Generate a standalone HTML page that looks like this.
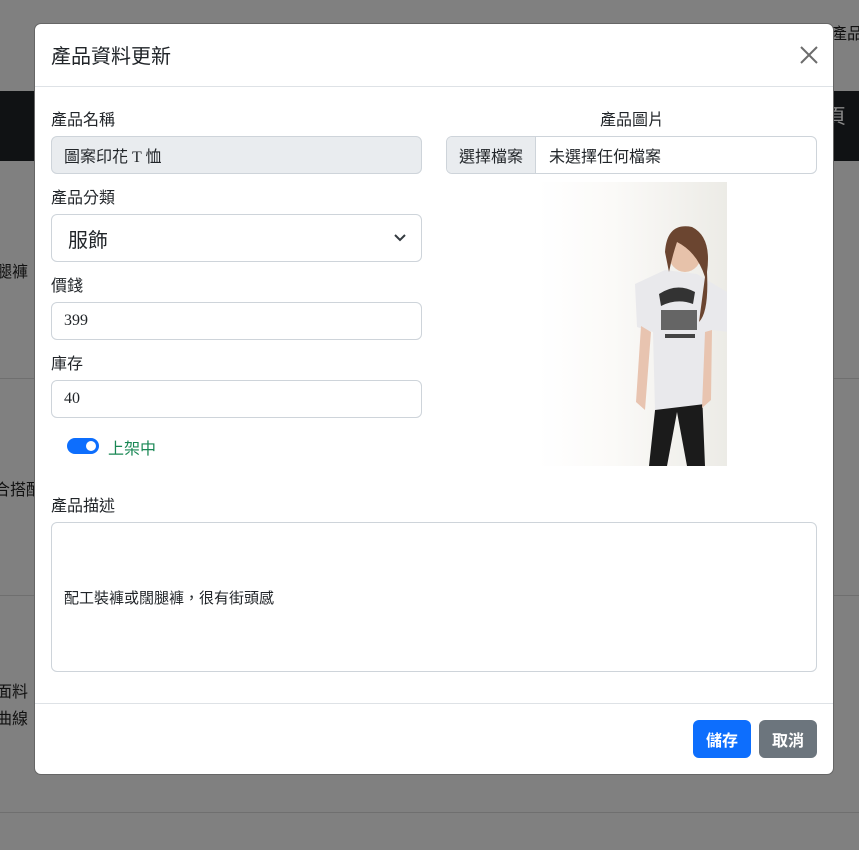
<!DOCTYPE html>
<html><head><meta charset="utf-8"><style>
*{box-sizing:border-box;margin:0;padding:0}
body{width:859px;height:850px;overflow:hidden;background:#808080;font-family:"Liberation Serif","Noto Sans CJK TC",sans-serif;color:#212529;position:relative}
.abs{position:absolute}
.bgt{position:absolute;font-size:16px;color:#111;white-space:nowrap}
.hl{position:absolute;left:0;right:0;height:1px;background:#6f6f6f}
.modal{position:absolute;left:34px;top:23px;width:800px;height:752px;background:#fff;border-radius:7px;border:1px solid #666}
.lbl{position:absolute;font-size:16px;color:#212529}
.inp{position:absolute;border:1px solid #ced4da;border-radius:6px;background:#fff;font-size:16px;padding-left:12px;display:flex;align-items:center}
</style></head><body>
<div class="abs" style="left:0;top:91px;width:859px;height:70px;background:#101214"></div>
<div class="hl" style="top:378px"></div>
<div class="hl" style="top:595px"></div>
<div class="hl" style="top:812px"></div>
<div class="bgt" style="left:815px;top:20px">有產品</div>
<div class="bgt" style="left:826px;top:100px;color:#888;font-size:20px">頁</div>
<div class="bgt" style="left:-4px;top:258px">腿褲，</div>
<div class="bgt" style="left:-6px;top:476px">合搭配</div>
<div class="bgt" style="left:-4px;top:678px">面料，</div>
<div class="bgt" style="left:-4px;top:705px">曲線，</div>

<div class="modal">
  <div class="abs" style="left:16px;top:16px;font-size:20px">產品資料更新</div>
  <svg class="abs" style="left:764px;top:21px" width="20" height="20" viewBox="0 0 20 20"><path d="M2 2L18 18M18 2L2 18" stroke="#6c6c6c" stroke-width="2"/></svg>
  <div class="abs" style="left:0;top:62px;width:798px;height:1px;background:#dee2e6"></div>

  <div class="lbl" style="left:16px;top:82px">產品名稱</div>
  <div class="inp" style="left:16px;top:112px;width:371px;height:38px;background:#e9ecef">圖案印花 T 恤</div>
  <div class="lbl" style="left:16px;top:160px">產品分類</div>
  <div class="inp" style="left:16px;top:190px;width:371px;height:48px;font-size:20px;padding-left:16px">服飾
    <svg class="abs" style="right:14px;top:18px" width="14" height="10" viewBox="0 0 14 10"><path d="M2 2l5 5 5-5" stroke="#343a40" stroke-width="2" fill="none"/></svg></div>
  <div class="lbl" style="left:16px;top:248px">價錢</div>
  <div class="inp" style="left:16px;top:278px;width:371px;height:38px">399</div>
  <div class="lbl" style="left:16px;top:326px">庫存</div>
  <div class="inp" style="left:16px;top:356px;width:371px;height:38px">40</div>
  <div class="abs" style="left:32px;top:414px;width:32px;height:16px;border-radius:8px;background:#0d6efd"></div>
  <div class="abs" style="left:51px;top:417px;width:10px;height:10px;border-radius:50%;background:#fff"></div>
  <div class="abs" style="left:73px;top:411px;font-size:16px;color:#198754">上架中</div>

  <div class="lbl" style="left:565px;top:82px">產品圖片</div>
  <div class="inp" style="left:411px;top:112px;width:371px;height:38px;padding-left:0;overflow:hidden">
    <div style="width:89px;height:100%;background:#e9ecef;border-right:1px solid #ced4da;display:flex;align-items:center;justify-content:center">選擇檔案</div>
    <div style="padding-left:13px">未選擇任何檔案</div>
  </div>
  <svg class="abs" style="left:502px;top:158px" width="190" height="284" viewBox="0 0 190 284">
    <defs><linearGradient id="g" x1="0" x2="1"><stop offset="0" stop-color="#fff"/><stop offset="0.4" stop-color="#fbfaf8"/><stop offset="1" stop-color="#ecebe6"/></linearGradient></defs>
    <rect width="190" height="284" fill="url(#g)"/>
    <path d="M120 210 L112 284 L130 284 L140 230 L150 284 L168 284 L165 210 Z" fill="#1b1b1b"/>
    <path d="M98 102 L128 88 L160 92 L190 110 L192 150 L175 148 L168 222 L118 228 L116 150 L100 145 Z" fill="#e9e9ec"/>
    <path d="M104 144 L99 220 L108 228 L114 150Z M175 148 L174 218 L165 226 L168 150Z" fill="#e8c4b0"/>
    <ellipse cx="148" cy="70" rx="17" ry="20" fill="#e7c2aa"/>
    <path d="M128 70 Q130 40 155 45 Q175 55 170 90 Q172 130 162 140 L168 95 Q160 70 140 60 Q135 75 132 90Z" fill="#6b4530"/>
    <path d="M122 112 Q140 100 158 110 L156 122 Q140 116 124 124Z" fill="#333"/>
    <rect x="124" y="128" width="36" height="20" fill="#444" opacity="0.8"/>
    <rect x="128" y="152" width="30" height="4" fill="#444"/>
  </svg>

  <div class="lbl" style="left:16px;top:468px">產品描述</div>
  <div class="inp" style="left:16px;top:498px;width:766px;height:150px;font-size:15px">配工裝褲或闊腿褲，很有街頭感</div>

  <div class="abs" style="left:0;top:679px;width:798px;height:1px;background:#dee2e6"></div>
  <div class="abs" style="left:658px;top:696px;width:58px;height:38px;border-radius:6px;background:#0d6efd;color:#fff;font-weight:bold;font-size:16px;display:flex;align-items:center;justify-content:center">儲存</div>
  <div class="abs" style="left:724px;top:696px;width:58px;height:38px;border-radius:6px;background:#6c757d;color:#fff;font-weight:bold;font-size:16px;display:flex;align-items:center;justify-content:center">取消</div>
</div>
</body></html>
